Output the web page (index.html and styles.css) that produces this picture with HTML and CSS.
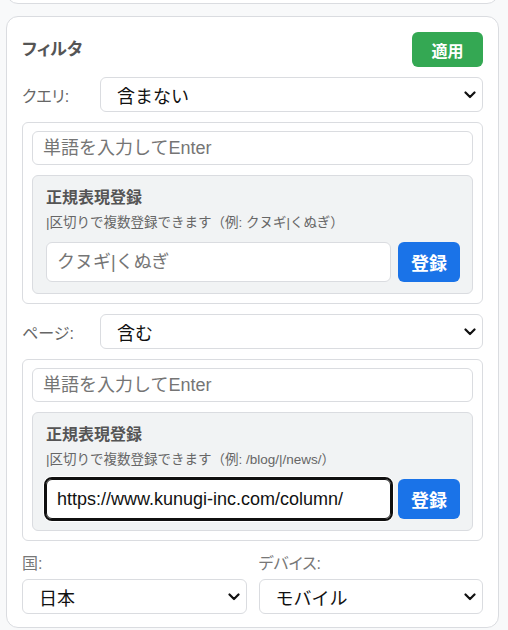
FILE: index.html
```html
<!DOCTYPE html>
<html lang="ja">
<head>
<meta charset="utf-8">
<title>フィルタ</title>
<link rel="stylesheet" href="styles.css">
</head>
<body>
<div class="page">
  <div class="card card-prev"></div>
  <section class="card filter">
    <div class="filter-head">
      <h2 class="title">フィルタ</h2>
      <button class="btn btn-apply">適用</button>
    </div>

    <div class="field-row">
      <span class="field-label">クエリ:</span>
      <div class="select"><span>含まない</span><svg class="chev" viewBox="0 0 12 8"><path d="M1.5 1.5 L6 6 L10.5 1.5" fill="none" stroke="#111" stroke-width="2.2" stroke-linecap="round" stroke-linejoin="round"/></svg></div>
    </div>
    <div class="term-box">
      <input class="term-input" type="text" placeholder="単語を入力してEnter">
      <div class="regex">
        <div class="regex-title">正規表現登録</div>
        <div class="regex-help">|区切りで複数登録できます（例: クヌギ|くぬぎ）</div>
        <div class="regex-row">
          <input class="regex-input" type="text" placeholder="クヌギ|くぬぎ">
          <button class="btn btn-reg">登録</button>
        </div>
      </div>
    </div>

    <div class="field-row second">
      <span class="field-label">ページ:</span>
      <div class="select"><span>含む</span><svg class="chev" viewBox="0 0 12 8"><path d="M1.5 1.5 L6 6 L10.5 1.5" fill="none" stroke="#111" stroke-width="2.2" stroke-linecap="round" stroke-linejoin="round"/></svg></div>
    </div>
    <div class="term-box">
      <input class="term-input" type="text" placeholder="単語を入力してEnter">
      <div class="regex">
        <div class="regex-title">正規表現登録</div>
        <div class="regex-help">|区切りで複数登録できます（例: /blog/|/news/）</div>
        <div class="regex-row">
          <input class="regex-input focused" type="text" value="https://www.kunugi-inc.com/column/">
          <button class="btn btn-reg">登録</button>
        </div>
      </div>
    </div>

    <div class="meta">
      <div class="meta-col">
        <div class="meta-label">国:</div>
        <div class="select"><span>日本</span><svg class="chev" viewBox="0 0 12 8"><path d="M1.5 1.5 L6 6 L10.5 1.5" fill="none" stroke="#111" stroke-width="2.2" stroke-linecap="round" stroke-linejoin="round"/></svg></div>
      </div>
      <div class="meta-col">
        <div class="meta-label">デバイス:</div>
        <div class="select"><span>モバイル</span><svg class="chev" viewBox="0 0 12 8"><path d="M1.5 1.5 L6 6 L10.5 1.5" fill="none" stroke="#111" stroke-width="2.2" stroke-linecap="round" stroke-linejoin="round"/></svg></div>
      </div>
    </div>
  </section>
</div>
</body>
</html>
```

FILE: styles.css
```css
html, body {
  margin: 0;
  padding: 0;
}
body {
  background: #f8f9fa;
  font-family: "Liberation Sans", "Noto Sans CJK JP", sans-serif;
  color: #222;
  overflow: hidden;
}
.page {
  width: 493px;
  margin-left: 6px;
}
.card {
  background: #fff;
  border: 1px solid #dadce0;
  border-radius: 12px;
  box-sizing: border-box;
}
.card-prev {
  height: 24px;
  margin-top: -20px;
}
.filter {
  margin-top: 12px;
  padding: 15px 15px 13px;
}
.filter-head {
  display: flex;
  justify-content: space-between;
  align-items: center;
  height: 35px;
}
.title {
  margin: 0;
  font-size: 17px;
  font-weight: 700;
  color: #555;
  font-feature-settings: "palt";
  line-height: 24px;
}
.btn {
  border: 0;
  color: #fff;
  font-family: inherit;
  font-weight: 700;
  border-radius: 6px;
  padding: 0;
  cursor: pointer;
}
.btn-apply {
  width: 71px;
  height: 35px;
  background: #34a853;
  font-size: 16px;
}
.field-row {
  display: grid;
  grid-template-columns: 78px 1fr;
  align-items: center;
  margin-top: 10px;
}
.field-row.second {
  margin-top: 10px;
}
.field-label {
  font-size: 16px;
  color: #666;
  font-feature-settings: "palt";
}
.select {
  height: 35px;
  box-sizing: border-box;
  border: 1px solid #dadce0;
  border-radius: 6px;
  background: #fff;
  display: flex;
  align-items: center;
  justify-content: space-between;
  padding: 0 6px 0 16px;
  font-size: 18px;
  color: #111;
}
.chev {
  width: 12px;
  height: 8px;
  display: block;
}
.term-box {
  margin-top: 10px;
  border: 1px solid #dadce0;
  border-radius: 6px;
  padding: 8px 9px 9px;
}
.term-input,
.regex-input {
  display: block;
  box-sizing: border-box;
  border: 1px solid #dadce0;
  border-radius: 6px;
  background: #fff;
  padding: 0 10px;
  font-family: inherit;
  font-size: 18px;
  color: #111;
  outline: none;
  margin: 0;
}
.term-input {
  width: 100%;
  height: 34px;
}
.term-input::placeholder,
.regex-input::placeholder {
  color: #757575;
}
.regex {
  margin-top: 10px;
  background: #f1f3f4;
  border: 1px solid #dadce0;
  border-radius: 6px;
  padding: 12px 12px 11px 13px;
}
.regex-title {
  font-size: 16px;
  font-weight: 700;
  color: #555;
  line-height: 20px;
}
.regex-help {
  font-size: 13.5px;
  color: #666;
  line-height: 18px;
  margin-top: 6px;
}
.regex-row {
  display: flex;
  gap: 7px;
  margin-top: 10px;
}
.regex-input {
  flex: 1;
  min-width: 0;
  height: 40px;
}
.regex-input.focused {
  border-color: #101010;
  outline: 2px solid #101010;
  box-shadow: 0 0 0 3px #fff;
}
.btn-reg {
  width: 62px;
  height: 40px;
  background: #1a73e8;
  font-size: 18px;
  flex: none;
}
.meta {
  display: grid;
  grid-template-columns: 1fr 1fr;
  gap: 12px;
  margin-top: 12px;
}
.meta-label {
  font-size: 16px;
  line-height: 22px;
  color: #777;
  margin-bottom: 4px;
  font-feature-settings: "palt";
}
```
